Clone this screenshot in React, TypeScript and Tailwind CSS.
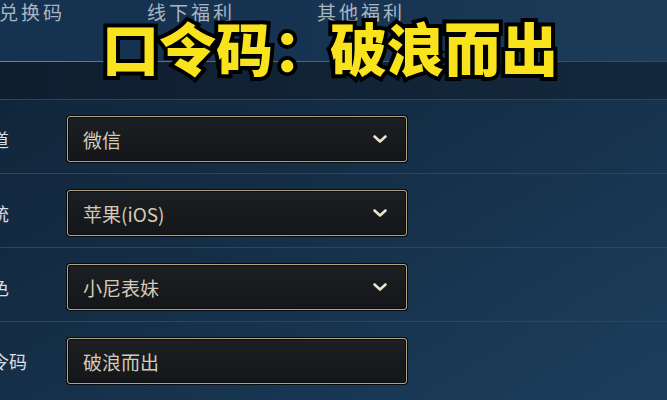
import React from 'react';

const FONT = { fontFamily: '"Noto Sans CJK SC", "Noto Sans", sans-serif' };

const TABS = ['兑换码', '线下福利', '其他福利'];

const ROWS = [
  { label: '渠道', value: '微信', select: true },
  { label: '系统', value: '苹果(iOS)', select: true },
  { label: '角色', value: '小尼表妹', select: true },
  { label: '口令码', value: '破浪而出', select: false },
];

const Chevron: React.FC = () => (
  <svg width="14" height="9" viewBox="0 0 14 9" className="shrink-0">
    <polyline points="1.5,1.5 7,6.5 12.5,1.5" fill="none" stroke="#ebe3cb" strokeWidth="2.6" strokeLinecap="round" strokeLinejoin="round" />
  </svg>
);

const Field: React.FC<{ label: string; value: string; select: boolean }> = ({ label, value, select }) => (
  <div className="h-[74px] border-t border-[#2a4660] flex items-start pt-[16px]">
    <div className="w-[94px] ml-[-27px] h-[46px] flex items-center text-[18px] text-[#d9dee3] leading-none">
      {label}
    </div>
    <div className="w-[340px] h-[46px] rounded-[3px] border border-[#b3a583] bg-gradient-to-b from-[#1c1f23] to-[#141619] shadow-[0_0_0_1px_#07090c,inset_0_0_0_1px_#0b0d10] flex items-center pl-[15px] pr-[19px]">
      <span className="flex-1 text-[19px] text-[#d3cbb9] leading-none">{value}</span>
      {select && <Chevron />}
    </div>
  </div>
);

const App: React.FC = () => {
  return (
    <div
      className="relative w-[667px] h-[400px] overflow-hidden bg-gradient-to-br from-[#0f2336] via-[#152f48] to-[#1c3f5e]"
      style={FONT}
    >
      {/* tab bar */}
      <div className="h-[61px] bg-gradient-to-r from-[#153250] via-[#163452] to-[#1c3c5a] flex items-start gap-[82px] ml-[-1px]">
        {TABS.map((t) => (
          <span key={t} className="text-[19px] tracking-[3px] leading-[24px] text-[#a9b6c2]">
            {t}
          </span>
        ))}
      </div>
      <div className="h-[1px] bg-gradient-to-r from-[#5589ad] via-[#3a668a] to-[#284c6b]" />
      <div className="h-[37px] bg-gradient-to-r from-[#0f1e2f] to-[#13283d]" />

      {/* form rows */}
      <div className="flex flex-col">
        {ROWS.map((r) => (
          <Field key={r.label} {...r} />
        ))}
      </div>

      {/* yellow caption overlay */}
      <div className="absolute left-[102px] top-[18px] text-[57px] font-black leading-none whitespace-nowrap text-[#f9e31d] [-webkit-text-stroke:8px_#000] [paint-order:stroke_fill]">
        口令码：破浪而出
      </div>
    </div>
  );
};

export default App;
